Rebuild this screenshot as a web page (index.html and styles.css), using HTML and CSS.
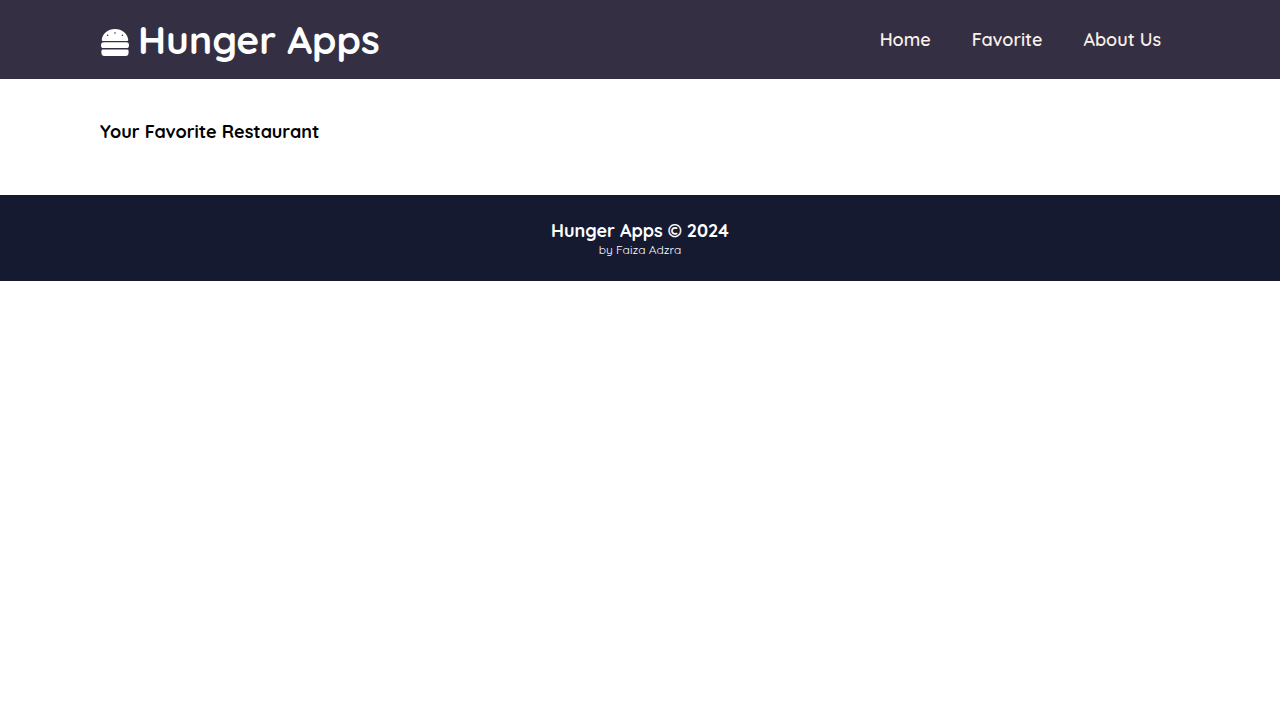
FILE: index.html
```html
<!DOCTYPE html>
<html lang="en">
<head>
<meta charset="utf-8">
<meta name="viewport" content="width=device-width, initial-scale=1">
<title>Hunger Apps</title>
<link rel="stylesheet" href="styles.css">
</head>
<body>
<header class="app-bar">
  <h1 class="brand">
    <svg class="brand-icon" viewBox="0 0 30 30" aria-hidden="true"><path fill="currentColor" fill-rule="evenodd" d="M3 14Q1.500 14 1.800 12.500C2.600 6.500 8 2 15 2S27.400 6.500 28.200 12.500Q28.500 14 27 14ZM6.800 8.200a.8.8 0 1 0 1.600 0a.8.8 0 1 0-1.600 0M14.200 6a.8.8 0 1 0 1.600 0a.8.8 0 1 0-1.600 0M21.600 8.200a.8.8 0 1 0 1.600 0a.8.8 0 1 0-1.600 0M3.500 15.300H26.500a2.500 2.900 0 0 1 0 5.800H3.500a2.500 2.900 0 0 1 0-5.800ZM3 22.600H27Q28.600 22.600 28.600 24V25.500Q28.600 29 25.500 29H4.500Q1.400 29 1.400 25.500V24Q1.400 22.600 3 22.600Z"/></svg>
    <span>Hunger Apps</span>
  </h1>
  <nav class="nav" aria-label="Main">
    <a href="#home">Home</a>
    <a href="#favorite">Favorite</a>
    <a href="#about">About Us</a>
  </nav>
</header>
<main class="content">
  <h2 class="title">Your Favorite Restaurant</h2>
</main>
<footer class="footer">
  <p class="copyright">Hunger Apps © 2024</p>
  <p class="author">by Faiza Adzra</p>
</footer>
</body>
</html>
```
FILE: styles.css
```css
* { box-sizing: border-box; }
body { margin: 0; background: #fff; color: #000; font-family: Quicksand, Lato, sans-serif; }
.app-bar { display: flex; align-items: center; justify-content: space-between; padding: 15px 119px 15px 100px; background: #352f44; color: #fff; }
.brand { display: flex; align-items: center; gap: 8px; margin: 0; font-size: 39px; line-height: 49px; font-weight: 700; }
.brand-icon { width: 30px; height: 30px; margin-top: 4px; }
.nav { display: flex; gap: 41px; font-size: 18px; line-height: 24px; font-weight: 600; }
.nav a { color: #faf0e6; text-decoration: none; }
.content { padding: 41px 100px 51px; }
.title { margin: 0; font-size: 18px; line-height: 24px; font-weight: 700; }
.footer { padding: 24px; background: #161a30; color: #fff; text-align: center; }
.copyright { margin: 0; font-size: 18px; line-height: 24px; font-weight: 700; }
.author { margin: 0; font-size: 12px; line-height: 14px; font-weight: 400; }
```
